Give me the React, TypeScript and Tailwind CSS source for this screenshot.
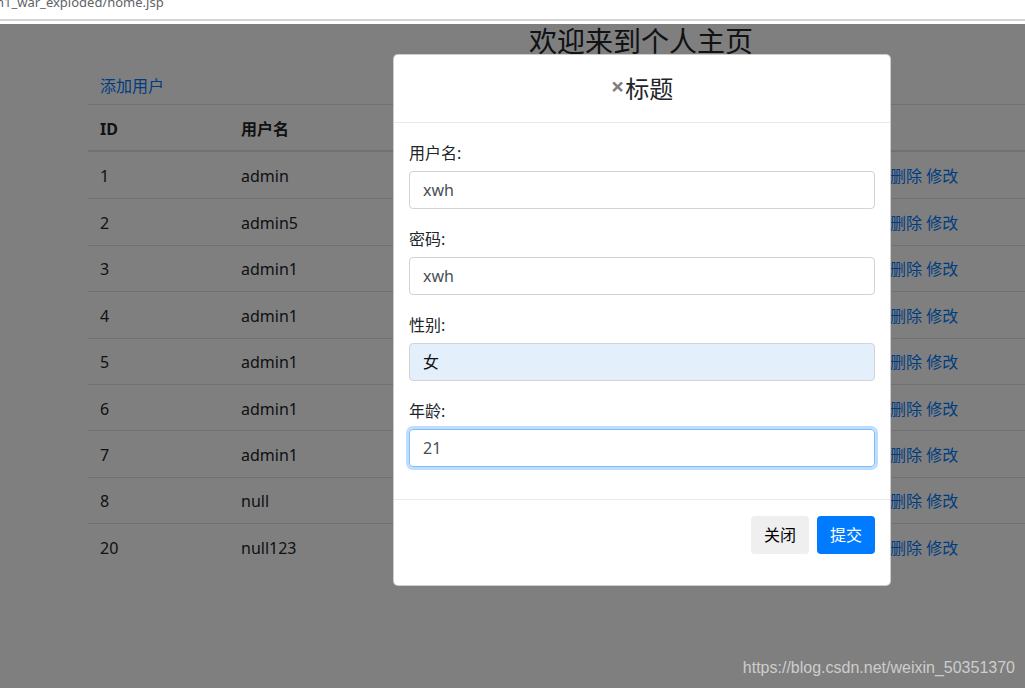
import React from 'react';

const rows = [
  { id: '1', name: 'admin' },
  { id: '2', name: 'admin5' },
  { id: '3', name: 'admin1' },
  { id: '4', name: 'admin1' },
  { id: '5', name: 'admin1' },
  { id: '6', name: 'admin1' },
  { id: '7', name: 'admin1' },
  { id: '8', name: 'null' },
  { id: '20', name: 'null123' },
];

export default function App() {
  return (
    <div className="w-[1025px] h-[688px] overflow-hidden bg-white flex flex-col font-['Noto_Sans','Noto_Sans_CJK_SC',sans-serif] text-[#212529]">
      {/* browser address strip, cut at the top */}
      <div className="h-[19px] overflow-hidden shrink-0">
        <div className="-mt-[5px] -ml-[4px] text-[13px] leading-[14px] text-[#5f6368] whitespace-nowrap">
          n1_war_exploded/home.jsp
        </div>
      </div>
      <div className="h-[2px] bg-[#d4d4d4] shrink-0" />
      <div className="h-[3px] shrink-0" />

      <div className="relative flex-1">
        {/* page under the modal */}
        <div className="w-[1282px]">
          <h1 className="text-center text-[28px] leading-[35px] font-normal">欢迎来到个人主页</h1>
          <div className="ml-[100px] mt-[15px] text-[16px] leading-[24px] text-[#007bff]">添加用户</div>
          <div className="ml-[88px] mt-[6px] w-[1100px] text-[16px]">
            <div className="flex h-[48px] pt-[2px] items-center border-t border-b-2 border-[#dee2e6] font-bold">
              <div className="w-[141px] px-[12px]">ID</div>
              <div className="w-[160px] px-[12px]">用户名</div>
              <div className="w-[489px]" />
              <div className="px-[12px]" />
            </div>
            {rows.map((r, i) => (
              <div
                key={r.id}
                className={`flex h-[46.4px] pt-[2px] items-center ${i > 0 ? 'border-t border-[#dee2e6]' : ''}`}
              >
                <div className="w-[141px] px-[12px]">{r.id}</div>
                <div className="w-[160px] px-[12px]">{r.name}</div>
                <div className="w-[489px]" />
                <div className="px-[12px] text-[#007bff] whitespace-nowrap">删除 修改</div>
              </div>
            ))}
          </div>
        </div>

        {/* backdrop */}
        <div className="absolute inset-0 bg-black/50" />

        {/* modal */}
        <div className="absolute left-[393px] top-[30px] w-[498px] bg-white rounded-[5px] border border-black/20 flex flex-col">
          <div className="h-[68px] border-b border-[#e9ecef] flex items-center justify-center">
            <span className="text-[24px] leading-[22px] font-bold text-black/50 -mt-[6px]">×</span>
            <span className="text-[24px] leading-[30px] ml-[1px]">标题</span>
          </div>
          <div className="px-[15px] pt-[19px] pb-[32px] flex flex-col gap-[19px]">
            <div>
              <div className="h-[22px] leading-[22px] text-[16px] mb-[7px]">用户名:</div>
              <div className="h-[38px] border border-[#ced4da] rounded-[4px] px-[13px] flex items-center text-[16px] text-[#495057]">xwh</div>
            </div>
            <div>
              <div className="h-[22px] leading-[22px] text-[16px] mb-[7px]">密码:</div>
              <div className="h-[38px] border border-[#ced4da] rounded-[4px] px-[13px] flex items-center text-[16px] text-[#495057]">xwh</div>
            </div>
            <div>
              <div className="h-[22px] leading-[22px] text-[16px] mb-[7px]">性别:</div>
              <div className="h-[38px] border border-[#ced4da] bg-[#e3f0fb] rounded-[4px] px-[13px] flex items-center text-[16px] text-[#111]">女</div>
            </div>
            <div>
              <div className="h-[22px] leading-[22px] text-[16px] mb-[7px]">年龄:</div>
              <div className="h-[38px] border border-[#80bdff] shadow-[0_0_0_3px_rgba(0,123,255,0.25)] rounded-[4px] px-[13px] flex items-center text-[16px] text-[#495057]">21</div>
            </div>
          </div>
          <div className="border-t border-[#e9ecef] pt-[16px] pb-[31px] px-[15px] flex justify-end gap-[8px]">
            <button className="h-[38px] px-[13px] rounded-[4px] bg-[#efefef] text-black text-[16px]">关闭</button>
            <button className="h-[38px] px-[13px] rounded-[4px] bg-[#007bff] text-white text-[16px]">提交</button>
          </div>
        </div>

        {/* watermark */}
        <div className="absolute right-[10px] bottom-[11px] text-[16px] leading-[18px] text-[#cdcdcd] font-['Liberation_Sans',Arial,sans-serif]">
          https://blog.csdn.net/weixin_50351370
        </div>
      </div>
    </div>
  );
}
